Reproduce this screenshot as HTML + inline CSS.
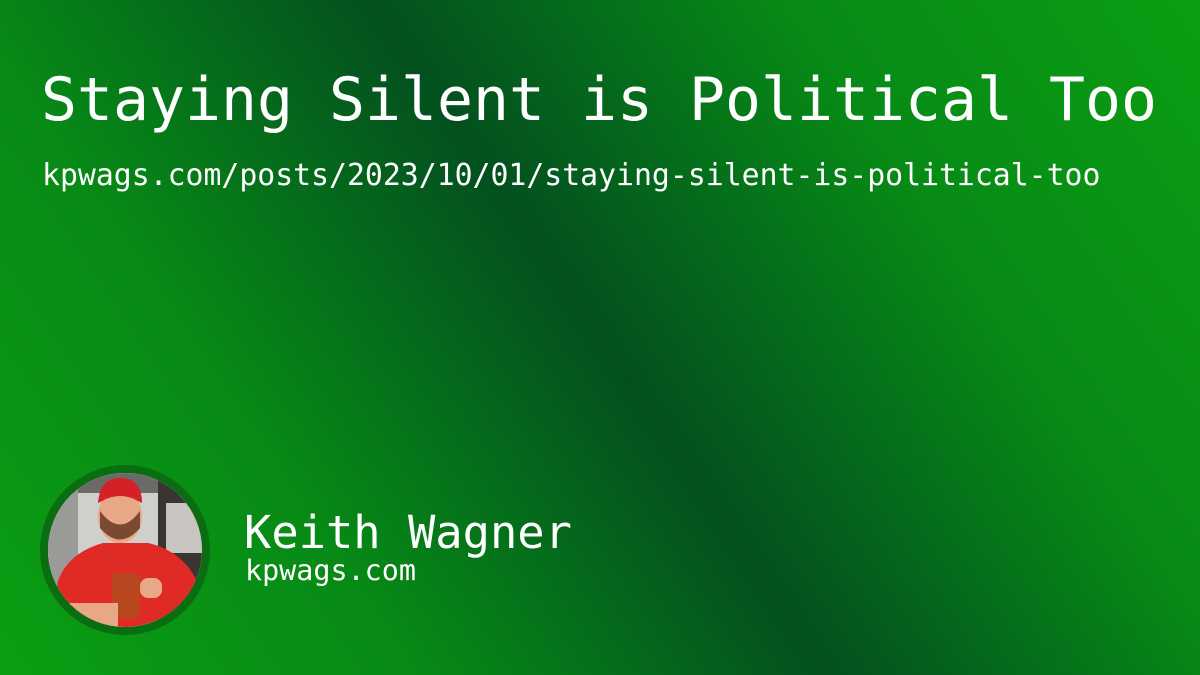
<!DOCTYPE html>
<html><head><style>
html,body{margin:0;padding:0;}
body{width:1200px;height:675px;overflow:hidden;position:relative;font-family:"DejaVu Sans Mono","Liberation Mono",monospace;color:#fff;
background:linear-gradient(56deg,#0b9e12 0%,#078a16 25%,#03501f 50%,#078a16 75%,#0b9e12 100%);}
.t{position:absolute;left:41px;top:62px;font-size:59.8px;line-height:76px;white-space:nowrap;}
.u{position:absolute;left:42px;top:157px;font-size:29.8px;line-height:38px;white-space:nowrap;}
.n{position:absolute;left:244px;top:506px;font-size:45.4px;line-height:54px;white-space:nowrap;}
.d{position:absolute;left:245px;top:554px;font-size:28.4px;line-height:34px;white-space:nowrap;}
.av{position:absolute;left:40px;top:465px;width:154px;height:154px;border:8px solid #0a6d12;border-radius:50%;overflow:hidden;background:#d8d8d4;}
</style></head><body>
<div class="t">Staying Silent is Political Too</div>
<div class="u">kpwags.com/posts/2023/10/01/staying-silent-is-political-too</div>
<div class="av">
<svg width="154" height="154" viewBox="0 0 154 154">
<rect width="154" height="154" fill="#cfcfcb"/>
<rect x="0" y="0" width="154" height="20" fill="#6a6a68"/>
<rect x="110" y="0" width="44" height="154" fill="#3a3533"/>
<rect x="118" y="30" width="36" height="50" fill="#c8c4c0"/>
<rect x="0" y="0" width="30" height="154" fill="#9a9a98"/>
<path d="M10 108 Q20 80 55 70 L100 70 Q135 78 150 110 L154 154 L0 154 Z" fill="#e02a26"/>
<ellipse cx="72" cy="43" rx="22" ry="27" fill="#e8a888"/>
<path d="M52 38 Q72 65 92 38 L92 55 Q72 78 52 55 Z" fill="#7a4a30"/>
<path d="M50 30 Q52 5 72 5 Q94 5 94 30 L90 28 Q72 18 54 28 Z" fill="#d52028"/>
<rect x="64" y="100" width="28" height="45" rx="3" fill="#b8461e"/>
<rect x="92" y="105" width="22" height="20" rx="8" fill="#e8a888"/>
<rect x="10" y="130" width="60" height="24" fill="#e8a888"/>
</svg>
</div>
<div class="n">Keith Wagner</div>
<div class="d">kpwags.com</div>
</body></html>
